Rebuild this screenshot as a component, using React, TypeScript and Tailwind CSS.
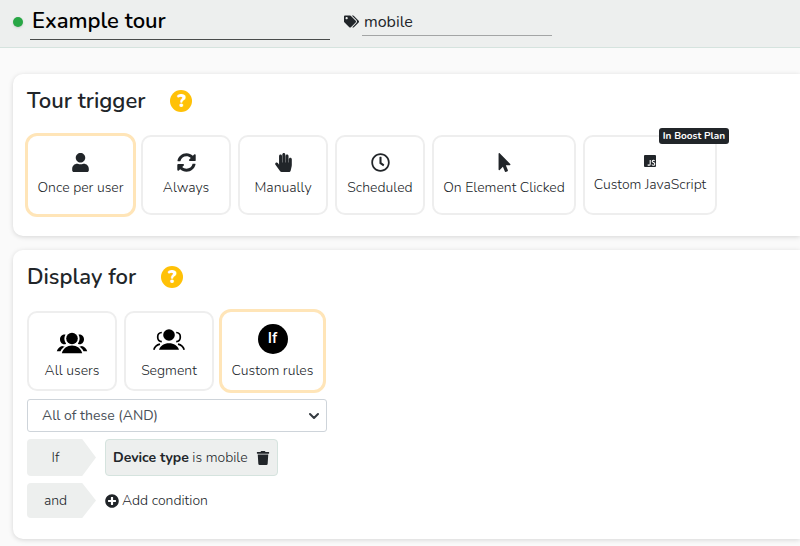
import React, { useState } from "react";
import clsx from "clsx";
import {
  FaHandPaper,
  FaMousePointer,
  FaPlusCircle,
  FaRegClock,
  FaSyncAlt,
  FaTags,
  FaTrash,
  FaUser,
} from "react-icons/fa";

const JsIcon = () => (
  <svg width="20" height="20" viewBox="0 0 20 20" aria-hidden="true">
    <rect x="4" y="5" width="12" height="12" rx="1" fill="#212529" />
    <path
      d="M10.200 10v4c0 .9-.5 1.300-1.200 1.300-.5 0-.9-.2-1.200-.7M14.600 10.900c-.3-.4-.7-.6-1.200-.6-.7 0-1.200.4-1.200 1 0 1.600 2.600.9 2.600 2.600 0 .9-.6 1.400-1.500 1.400-.6 0-1.100-.3-1.400-.8"
      fill="none"
      stroke="#fff"
      strokeWidth="1.100"
    />
  </svg>
);

const AllUsersIcon = () => (
  <svg width="32" height="32" viewBox="0 -2 32 32" aria-hidden="true">
    <path d="M9.500 8.600C6.600 8.200 4 10.200 4 13.300c0 2.800 1.800 5 4.200 5 .8 0 1.300-.2 1.900-.6C7.900 14.700 7.900 11.300 9.500 8.600zM22.500 8.600c2.900-.4 5.500 1.600 5.500 4.700 0 2.800-1.800 5-4.200 5-.8 0-1.300-.2-1.900-.6 2.200-3 2.200-6.400.6-9.100z" />
    <path d="M.8 25.300c.7-2.800 2.600-4.800 5.300-5.400l2.600.9C6.800 21.800 5.300 23.300 4.500 25.300zM31.200 25.300c-.7-2.800-2.600-4.800-5.300-5.400l-2.600.9c1.900 1 3.400 2.500 4.200 4.500z" />
    <circle cx="16" cy="12.500" r="5.800" />
    <path d="M5.800 27.200c1.300-4.700 5.200-7.600 10.200-7.600s8.900 2.900 10.200 7.600z" />
  </svg>
);

const SegmentIcon = () => (
  <svg width="32" height="32" viewBox="0 -1 32 32" aria-hidden="true">
    <g fill="none" stroke="#000" strokeWidth="1.700">
      <path d="M8.800 7.500C6.200 7.600 4.700 9.600 4.700 12c0 2.900 1.900 4.600 4.100 4.600M23.200 7.500c2.600.1 4.100 2.100 4.100 4.500 0 2.900-1.900 4.600-4.100 4.600" />
      <path d="M.8 24.700c.8-3 3-4.900 6.200-5.600M31.200 24.700c-.8-3-3-4.900-6.200-5.600" />
    </g>
    <circle cx="16" cy="10" r="5.800" />
    <path d="M6 24.800C7.300 20.600 11 18.200 16 18.200s8.700 2.400 10 6.600z" />
  </svg>
);

const IfIcon = () => (
  <span className="flex h-[30px] w-[30px] items-center justify-center rounded-full bg-black font-['Roboto',sans-serif] text-[15px] font-medium text-white">
    If
  </span>
);

type Option = {
  label: string;
  icon: React.ReactNode;
  width?: string;
  badge?: string;
};

const triggers: Option[] = [
  { label: "Once per user", icon: <FaUser size={19} />, width: "w-[107px]" },
  { label: "Always", icon: <FaSyncAlt size={19} /> },
  { label: "Manually", icon: <FaHandPaper size={19} /> },
  { label: "Scheduled", icon: <FaRegClock size={19} /> },
  {
    label: "On Element Clicked",
    icon: <FaMousePointer size={19} />,
    width: "w-36",
  },
  {
    label: "Custom JavaScript",
    icon: <JsIcon />,
    width: "w-[134px]",
    badge: "In Boost Plan",
  },
];

const audiences: Option[] = [
  { label: "All users", icon: <AllUsersIcon /> },
  { label: "Segment", icon: <SegmentIcon /> },
  { label: "Custom rules", icon: <IfIcon />, width: "w-[103px]" },
];

type OptionCardsProps = {
  options: Option[];
  selected: string;
  largeIcons?: boolean;
  onSelect: (label: string) => void;
};

const OptionCards = ({
  options,
  selected,
  largeIcons,
  onSelect,
}: OptionCardsProps) => (
  <div className="flex flex-wrap gap-[7px]">
    {options.map(({ label, icon, width, badge }) => (
      <button
        key={label}
        type="button"
        aria-pressed={selected === label}
        onClick={() => onSelect(label)}
        className={clsx(
          "relative flex h-20 shrink-0 cursor-pointer flex-col items-center rounded-[10px] border-2 bg-white whitespace-nowrap",
          width ?? "w-[90px]",
          badge ? "pt-[13px]" : largeIcons ? "pt-[11px]" : "pt-4",
          selected === label
            ? "border-transparent outline-[3px] -outline-offset-1 outline-[#ffe5b8]"
            : "border-[#eeeeee]"
        )}
      >
        <span className={clsx("flex items-start", largeIcons ? "h-8" : "h-5")}>
          {icon}
        </span>
        <span className="mt-1 leading-[21px]">{label}</span>
        {badge && (
          <span className="absolute -top-[9px] -right-[14px] rounded-[3px] bg-[#212529] px-1 text-[10px] leading-4 font-bold text-white">
            {badge}
          </span>
        )}
      </button>
    ))}
  </div>
);

type PanelProps = { title: string; children: React.ReactNode };

const Panel = ({ title, children }: PanelProps) => (
  <section className="rounded-l-[10px] bg-white px-3.5 pt-3 pb-[21px] shadow-[0_1px_5px_rgba(0,0,0,0.15)]">
    <div className="mb-[19px] flex items-center gap-[25px]">
      <h2 className="text-[22px] leading-[30px] font-semibold">{title}</h2>
      <button
        type="button"
        aria-label={`Help for ${title}`}
        className="flex h-[22px] w-[22px] cursor-pointer items-center justify-center rounded-full bg-[#ffc107] text-lg leading-none font-black text-white"
      >
        ?
      </button>
    </div>
    {children}
  </section>
);

const RuleTag = ({ children }: { children: React.ReactNode }) => (
  <div className="flex w-[69px] items-center justify-center self-stretch rounded-l-[4px] bg-[#edefee] pr-3 [clip-path:polygon(0_0,80%_0,100%_50%,80%_100%,0_100%)]">
    {children}
  </div>
);

const App = () => {
  const [trigger, setTrigger] = useState("Once per user");
  const [audience, setAudience] = useState("Custom rules");

  return (
    <div className="min-h-screen overflow-x-hidden bg-[#fafafa] font-[Nunito,'Open_Sans',sans-serif] text-sm font-light text-[#212529]">
      <header className="flex h-12 items-start border-b border-[#d5e3de] bg-[#edefee] pl-[13px]">
        <span className="mt-[17px] mr-[7px] h-2.5 w-2.5 rounded-full bg-[#28a745] shadow" />
        <input
          aria-label="Tour name"
          defaultValue="Example tour"
          className="h-10 w-[300px] border-b border-[#494b4b] px-0.5 pt-0.5 text-[22px] font-semibold text-black outline-none"
        />
        <label htmlFor="tags" className="mt-3.5 ml-3.5">
          <FaTags size={15} aria-label="Tags" />
        </label>
        <input
          id="tags"
          defaultValue="mobile"
          className="mt-2 ml-[3px] h-7 w-[190px] border-b border-[#a3a5a5] px-0.5 text-base font-normal outline-none"
        />
      </header>

      <main className="flex flex-col gap-3.5 pt-[26px] pb-[7px] pl-[13px]">
        <Panel title="Tour trigger">
          <OptionCards
            options={triggers}
            selected={trigger}
            onSelect={setTrigger}
          />
        </Panel>

        <Panel title="Display for">
          <OptionCards
            options={audiences}
            selected={audience}
            onSelect={setAudience}
            largeIcons
          />
          <div className="mt-2 flex flex-col items-start gap-[7px]">
            <div className="relative w-[300px]">
              <select
                aria-label="Match rules"
                className="h-[33px] w-full appearance-none rounded-[3px] border border-[#ced4da] bg-white px-3.5 font-normal text-[#495057]"
              >
                <option>All of these (AND)</option>
                <option>Any of these (OR)</option>
              </select>
              <svg
                className="pointer-events-none absolute top-3 right-2"
                width="10"
                height="10"
                viewBox="0 0 10 10"
                fill="none"
                stroke="#343a40"
                strokeWidth="2"
                strokeLinecap="round"
                strokeLinejoin="round"
              >
                <path d="M1 3l4 4 4-4" />
              </svg>
            </div>

            <div className="flex h-[37px] gap-[9px]">
              <RuleTag>If</RuleTag>
              <div className="flex items-center gap-2 rounded-[4px] border border-[#d5e3de] bg-[#edefee] px-[7px]">
                <span>
                  <b className="font-bold">Device type</b> is mobile
                </span>
                <button
                  type="button"
                  aria-label="Delete condition"
                  className="cursor-pointer"
                >
                  <FaTrash size={14} />
                </button>
              </div>
            </div>

            <div className="flex h-[35px] gap-[9px]">
              <RuleTag>and</RuleTag>
              <button
                type="button"
                className="flex cursor-pointer items-center gap-[3px]"
              >
                <FaPlusCircle size={14} />
                Add condition
              </button>
            </div>
          </div>
        </Panel>
      </main>
    </div>
  );
};

export default App;
